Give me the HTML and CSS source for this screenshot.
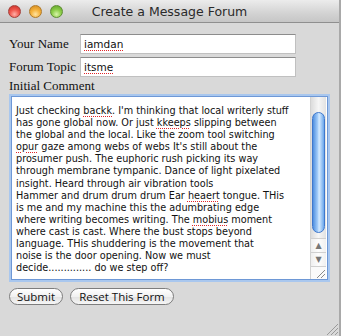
FILE: index.html
```html
<!DOCTYPE html>
<html lang="en">
<head>
  <meta charset="UTF-8">
  <meta name="viewport" content="width=device-width, initial-scale=1.0">
  <title>Create a Message Forum</title>
  <link rel="stylesheet" href="styles.css">
</head>
<body>
  <div class="window">
    <div class="titlebar">
      <div class="lights">
        <span class="light red"></span>
        <span class="light yellow"></span>
        <span class="light green"></span>
      </div>
      <div class="title">Create a Message Forum</div>
      <div></div>
    </div>

    <form class="content">
      <div class="fields">
        <label class="label">Your Name</label>
        <div class="field"><span class="typo">iamdan</span></div>
        <label class="label">Forum Topic</label>
        <div class="field"><span class="typo">itsme</span></div>
      </div>

      <div class="label comment-label">Initial Comment</div>

      <div class="comment-box">
        <div class="comment-text">
          Just checking <span class="typo">backk</span>. I'm thinking that local writerly stuff<br>
          has gone global now. Or just <span class="typo">kkeeps</span> slipping between<br>
          the global and the local. Like the zoom tool switching<br>
          <span class="typo">opur</span> gaze among webs of webs It's still about the<br>
          prosumer push. The euphoric rush picking its way<br>
          through membrane tympanic. Dance of light pixelated<br>
          insight. Heard through air vibration tools<br>
          Hammer and drum drum drum Ear <span class="typo">heaert</span> tongue. THis<br>
          is me and my machine this the adumbrating edge<br>
          where writing becomes writing. The <span class="typo">mobius</span> moment<br>
          where cast is cast. Where the bust stops beyond<br>
          language. THis shuddering is the movement that<br>
          noise is the door opening. Now we must<br>
          decide.............. do we step off?
        </div>
        <div class="scrollbar">
          <div class="track"><div class="thumb"></div></div>
          <div class="arrow">&#9650;</div>
          <div class="arrow">&#9660;</div>
          <div class="corner">
            <svg width="13" height="12" viewBox="0 0 13 12">
              <path d="M4 11 L12 3 M8 11 L12 7" stroke="#8a8a8a" stroke-width="1" fill="none"/>
            </svg>
          </div>
        </div>
      </div>

      <div class="buttons">
        <button type="button" class="btn submit">Submit</button>
        <button type="button" class="btn reset">Reset This Form</button>
      </div>
    </form>

    <svg class="grip" width="12" height="12" viewBox="0 0 12 12">
      <path d="M1 12 L12 1 M5 12 L12 5 M9 12 L12 9" stroke="#9a9a9a" stroke-width="1" fill="none"/>
    </svg>
  </div>
</body>
</html>
```

FILE: styles.css
```css
body {
  margin: 0;
  background-color: #d9d9d9;
}
.window {
  position: relative;
  width: 341px;
  height: 336px;
  box-sizing: border-box;
  background-color: #d9d9d9;
  border-right: 2px solid #a9a9a9;
  overflow: hidden;
}
.titlebar {
  display: grid;
  grid-template-columns: 1fr auto 1fr;
  align-items: center;
  height: 22px;
  background: linear-gradient(to bottom, #ececec, #d3d3d3 60%, #c6c6c6);
  border-bottom: 1px solid #8f8f8f;
}
.lights {
  display: flex;
  gap: 8px;
  padding-left: 8px;
}
.light {
  width: 13px;
  height: 13px;
  border-radius: 50%;
  box-sizing: border-box;
}
.red {
  background: radial-gradient(circle at 50% 75%, #ffb0a8 0, #f1594f 45%, #c52a22 100%);
  border: 1px solid #a5403a;
}
.yellow {
  background: radial-gradient(circle at 50% 75%, #ffe3a0 0, #f5b33e 45%, #d0861a 100%);
  border: 1px solid #b07a2a;
}
.green {
  background: radial-gradient(circle at 50% 75%, #d8f4a8 0, #8fcf4c 45%, #5c9f24 100%);
  border: 1px solid #5e8d34;
}
.title {
  font-family: "DejaVu Sans", sans-serif;
  font-size: 12.5px;
  color: #2a2a2a;
  padding-top: 1px;
}
.content {
  padding: 11px 0 0 9px;
  margin: 0;
}
.fields {
  display: grid;
  grid-template-columns: 71px 216px;
  row-gap: 3px;
  align-items: center;
}
.label {
  font-family: "Liberation Serif", serif;
  font-size: 13px;
  color: #111;
  line-height: 16px;
}
.field {
  height: 20px;
  box-sizing: border-box;
  background: #fff;
  border: 1px solid #c0c0c0;
  border-top-color: #8c8c8c;
  padding: 1px 0 0 3px;
  font-family: "DejaVu Sans", sans-serif;
  font-size: 10.5px;
  line-height: 16px;
  color: #111;
}
.typo {
  text-decoration: underline dotted #e0262a;
  text-decoration-thickness: 1px;
  text-underline-offset: 2px;
}
.comment-label {
  margin-top: 1px;
}
.comment-box {
  display: flex;
  width: 315px;
  height: 182px;
  margin: 2px 0 0 2px;
  background: #fff;
  border: 1px solid #6e98d6;
  box-shadow: 0 0 0 2px #a9c7ee;
}
.comment-text {
  flex: 1;
  padding: 8px 0 0 4px;
  font-family: "DejaVu Sans", sans-serif;
  font-size: 9.7px;
  line-height: 12.1px;
  color: #111;
  white-space: nowrap;
  overflow: hidden;
}
.scrollbar {
  display: flex;
  flex-direction: column;
  width: 15px;
  margin-right: 1px;
  border-left: 1px solid #d2d2d2;
}
.track {
  flex: 1;
  padding: 15px 1px 5px 1px;
  background: linear-gradient(to right, #dcdcdc, #f6f6f6 50%, #e2e2e2);
}
.thumb {
  height: 100%;
  box-sizing: border-box;
  border: 1px solid #3f78cc;
  border-radius: 7px;
  background: linear-gradient(to right, #4f8fe0, #a9d1fb 45%, #d8ecff 55%, #6aa6ec);
}
.arrow {
  height: 13px;
  border-top: 1px solid #d0d0d0;
  background: linear-gradient(to right, #efefef, #fdfdfd 50%, #f0f0f0);
  font-family: "DejaVu Sans", sans-serif;
  font-size: 8px;
  line-height: 13px;
  color: #777;
  text-align: center;
}
.corner {
  height: 12px;
  border-top: 1px solid #d0d0d0;
  background: #fafafa;
  display: flex;
  justify-content: flex-end;
}
.buttons {
  display: flex;
  gap: 7px;
  margin-top: 8px;
}
.btn {
  height: 17px;
  padding: 0;
  border: 1px solid #7d7d7d;
  border-radius: 9px;
  background: linear-gradient(to bottom, #ffffff, #f1f1f1 50%, #e2e2e2 51%, #f6f6f6);
  font-family: "Open Sans", sans-serif;
  font-size: 11.5px;
  line-height: 15px;
  color: #111;
}
.submit {
  width: 54px;
}
.reset {
  width: 104px;
}
.grip {
  position: absolute;
  right: 1px;
  bottom: 1px;
}
```
